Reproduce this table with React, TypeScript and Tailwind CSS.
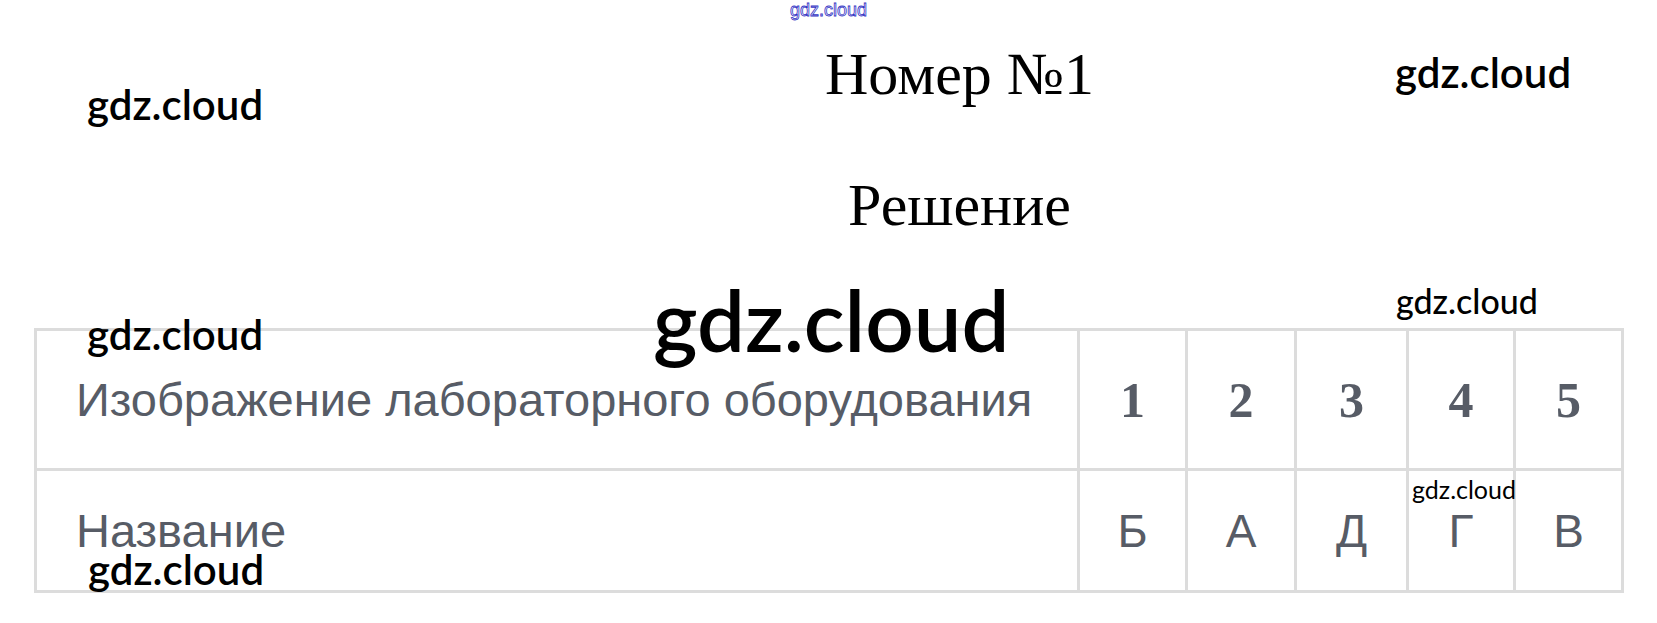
const cells = [
  { head: "1", value: "Б" },
  { head: "2", value: "А" },
  { head: "3", value: "Д" },
  { head: "4", value: "Г" },
  { head: "5", value: "В" },
];

// watermark laid over the page
function Mark({ className }: { className: string }) {
  return (
    <span
      className={`absolute leading-none whitespace-nowrap text-black font-['Lato',sans-serif] ${className}`}
    >
      gdz.cloud
    </span>
  );
}

export default function App() {
  return (
    <div className="relative w-[1657px] h-[623px] overflow-hidden bg-white">
      <div className="pt-[1px] text-center leading-none text-[18px] font-['Liberation_Sans',sans-serif] text-transparent [-webkit-text-stroke:0.8px_#3434c4]">
        gdz.cloud
      </div>

      <div className="flex flex-col items-center pl-[262px] font-['Liberation_Serif',serif] text-black leading-none">
        <h1 className="mt-[25px] text-[60px] font-normal">Номер №1</h1>
        <h2 className="mt-[71px] text-[60px] font-normal">Решение</h2>
      </div>

      <div className="ml-[34px] mt-[93px] w-fit grid grid-cols-[1040px_105px_106px_109px_104px_105px] grid-rows-[137px_119px] gap-[3px] p-[3px] bg-[#dcdcdc] font-['Liberation_Sans',sans-serif] text-[#575c66] leading-none">
        <div className="bg-white flex items-center pl-[39px] text-[47px]">
          Изображение лабораторного оборудования
        </div>
        {cells.map((c) => (
          <div
            key={c.head}
            className="bg-white flex items-center justify-center text-[50px] font-bold font-['Liberation_Serif',serif] text-[#575c66]"
          >
            {c.head}
          </div>
        ))}
        <div className="bg-white flex items-center pl-[39px] text-[47px]">
          Название
        </div>
        {cells.map((c) => (
          <div
            key={c.value}
            className="bg-white flex items-center justify-center text-[46px]"
          >
            {c.value}
          </div>
        ))}
      </div>

      <Mark className="left-[87px] top-[83px] text-[42px] font-semibold" />
      <Mark className="left-[1395px] top-[51px] text-[42px] font-semibold" />
      <Mark className="left-[87px] top-[313px] text-[42px] font-semibold" />
      <Mark className="left-[653px] top-[277px] text-[85px] font-semibold" />
      <Mark className="left-[1396px] top-[284px] text-[34px] font-medium" />
      <Mark className="left-[1412px] top-[477px] text-[25px] font-normal" />
      <Mark className="left-[88px] top-[548px] text-[42px] font-semibold" />
    </div>
  );
}
